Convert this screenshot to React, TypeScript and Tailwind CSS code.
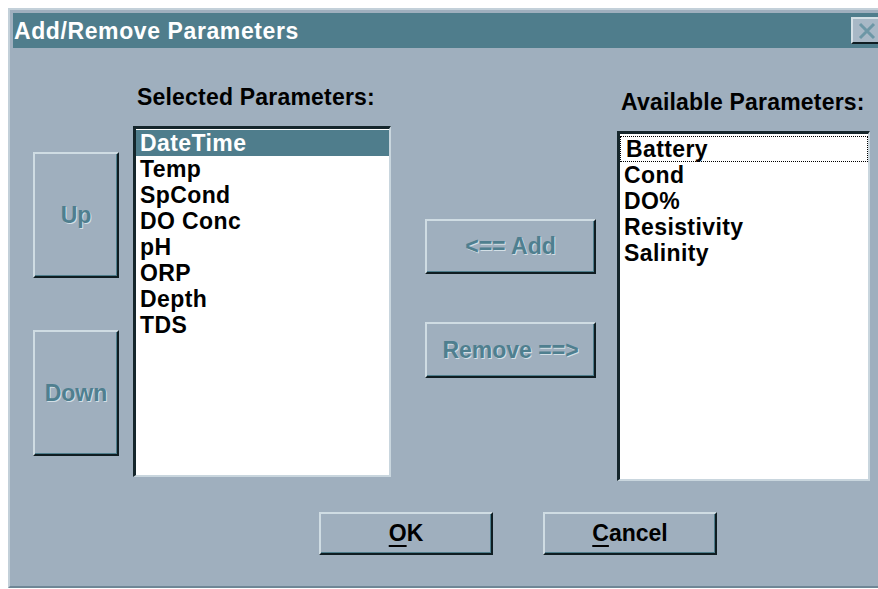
import React from "react";

const font = { fontFamily: '"Liberation Sans", Arial, sans-serif' };

const selected = ["DateTime", "Temp", "SpCond", "DO Conc", "pH", "ORP", "Depth", "TDS"];
const available = ["Battery", "Cond", "DO%", "Resistivity", "Salinity"];

// raised 3D button face, Win3.x style
const raised =
  "border-t-2 border-l-2 border-t-[#cfdce3] border-l-[#cfdce3] border-b-2 border-r-2 border-b-[#0f1d22] border-r-[#0f1d22] shadow-[inset_-1px_-1px_0_#4e7d8c] bg-[#9fafbe] flex items-center justify-center";

const disabledText = "text-[#4f7f8f] [text-shadow:1px_1px_0_#d3dfe6]";

function Listbox({
  items,
  active,
  focus,
  className,
}: {
  items: string[];
  active?: number;
  focus?: number;
  className: string;
}) {
  return (
    <div
      className={`bg-white border-t-[3px] border-l-[3px] border-t-[#15262c] border-l-[#15262c] border-b-2 border-r-2 border-b-[#c9d6de] border-r-[#c9d6de] ${className}`}
    >
      {items.map((it, i) => (
        <div
          key={it}
          className={`h-[26px] leading-[26px] text-[23px] font-bold tracking-[0.4px] whitespace-nowrap ${
            i === active ? "bg-[#4f7d8c] text-white pl-[4px]" : "text-black pl-[4px]"
          } ${i === focus ? "outline outline-1 outline-dotted outline-black -outline-offset-1 pl-[6px]" : ""}`}
        >
          {it}
        </div>
      ))}
    </div>
  );
}

export default function App() {
  return (
    <div className="w-[878px] h-[589px] bg-white overflow-hidden pt-[8px] pl-[8px]" style={font}>
      <div className="w-[890px] h-[580px] bg-[#9fafbe] border-l-2 border-t-2 border-l-[#c3d0d9] border-t-[#c3d0d9] border-b-2 border-b-[#6f8796] pt-[3px] pl-[3px]">
        {/* title bar */}
        <div className="w-[868px] h-[35px] bg-[#4f7d8c] flex items-center justify-between">
          <span className="pl-[1px] text-white font-bold text-[23px] tracking-[0.6px] leading-[26px]">
            Add/Remove Parameters
          </span>
          <div className="w-[30px] h-[27px] bg-[#a8b8c6] border-t-2 border-l-2 border-t-[#d4e0e6] border-l-[#d4e0e6] border-b-2 border-b-[#0f1d22] flex items-center justify-center">
            <svg width="20" height="18" viewBox="0 0 20 18">
              <path d="M3 2 L17 16 M17 2 L3 16" stroke="#6d97a6" strokeWidth="3" />
            </svg>
          </div>
        </div>

        {/* dialog body */}
        <div className="flex flex-col">
          <div className="flex items-start">
            <div className="ml-[20px] mt-[104px] flex flex-col gap-[52px]">
              <div className={`${raised} w-[86px] h-[126px]`}>
                <span className={`text-[23px] font-bold ${disabledText}`}>Up</span>
              </div>
              <div className={`${raised} w-[86px] h-[126px]`}>
                <span className={`text-[23px] font-bold ${disabledText}`}>Down</span>
              </div>
            </div>

            <div className="ml-[14px] mt-[36px] flex flex-col">
              <div className="h-[26px] leading-[26px] pl-[4px] text-[23px] font-bold tracking-[0.2px] text-black whitespace-nowrap">
                Selected Parameters:
              </div>
              <Listbox items={selected} active={0} className="mt-[16px] w-[258px] h-[351px] pt-[1px]" />
            </div>

            <div className="ml-[34px] mt-[171px] flex flex-col gap-[48px]">
              <div className={`${raised} w-[171px] h-[55px]`}>
                <span className={`text-[23px] font-bold ${disabledText}`}>&lt;== Add</span>
              </div>
              <div className={`${raised} w-[171px] h-[56px]`}>
                <span className={`text-[23px] font-bold ${disabledText}`}>Remove ==&gt;</span>
              </div>
            </div>

            <div className="ml-[21px] mt-[41px] flex flex-col">
              <div className="h-[26px] leading-[26px] pl-[4px] text-[23px] font-bold tracking-[0.2px] text-black whitespace-nowrap">
                Available Parameters:
              </div>
              <Listbox items={available} focus={0} className="mt-[16px] w-[253px] h-[350px] pt-[2px]" />
            </div>
          </div>

          <div className="flex mt-[31px] pl-[306px] gap-[50px]">
            <div className={`${raised} w-[174px] h-[43px]`}>
              <span className="text-[23px] font-bold text-black">
                <span className="underline underline-offset-4">O</span>K
              </span>
            </div>
            <div className={`${raised} w-[174px] h-[43px]`}>
              <span className="text-[23px] font-bold text-black">
                <span className="underline underline-offset-4">C</span>ancel
              </span>
            </div>
          </div>
        </div>
      </div>
    </div>
  );
}
